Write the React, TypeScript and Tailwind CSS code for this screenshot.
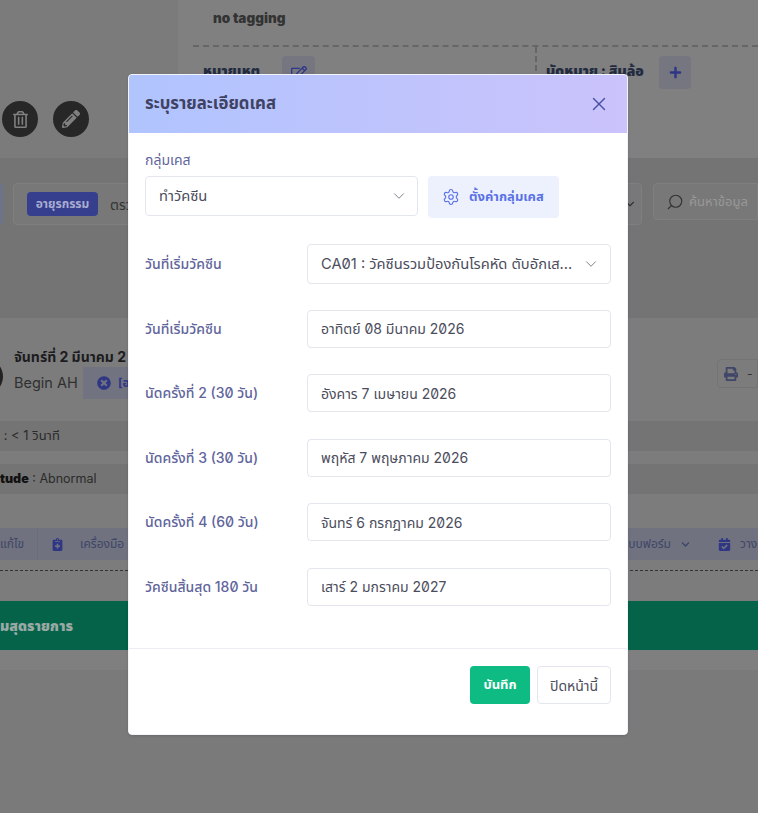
import { ChevronDown, Search, Settings, X } from "lucide-react";
import { FaCalendarCheck, FaChevronDown, FaNotesMedical, FaPencilAlt, FaPlus, FaPrint, FaRegEdit, FaRegTrashAlt, FaTimesCircle } from "react-icons/fa";

const fontCls = "font-['Inter','Noto_Sans','Noto_Sans_Thai',sans-serif] slashed-zero";

function Field({ label, value, select }: { label: string; value: string; select?: boolean }) {
  return (
    <div className="flex items-center">
      <div className="w-[162px] pb-[1px] text-[14px] font-medium text-[#5f659b]">{label}</div>
      <div className={`flex flex-1 items-center justify-between rounded border border-[#e4e6ef] pl-[13px] pr-[10px] text-[#4b4d5c] ${select ? "h-[40px] text-[14.7px]" : "h-[38px] text-[14px]"}`}>
        <span className="truncate">{value}</span>
        {select && <ChevronDown size={18} strokeWidth={1} className="shrink-0 text-[#55586a]" />}
      </div>
    </div>
  );
}

function Modal() {
  return (
    <div className="absolute left-[128px] top-[74px] h-[661px] w-[500px] overflow-hidden rounded border border-[#f3f4f9] bg-white shadow">
      <div className="flex h-[58px] items-center justify-between bg-gradient-to-r from-[#b0c4fe] to-[#cbc3fb] pl-[16px] pr-[17px]">
        <h2 className="text-[16.8px] font-bold text-[#3f4263]">ระบุรายละเอียดเคส</h2>
        <X size={22} strokeWidth={1.5} className="text-[#4a4fa8]" />
      </div>
      <div className="flex h-[516px] flex-col border-b border-[#eceef3] px-[16px]">
        <div className="mt-[18px] text-[14px] leading-[18px] text-[#5f659b]">กลุ่มเคส</div>
        <div className="mt-[7px] flex items-start gap-[10px]">
          <div className="flex h-[40px] w-[273px] items-center justify-between rounded border border-[#e4e6ef] pl-[13px] pr-[9px] text-[14.7px] text-[#4b4d5c]">
            <span>ทำวัคซีน</span>
            <ChevronDown size={18} strokeWidth={1} className="text-[#55586a]" />
          </div>
          <div className="flex h-[42px] w-[131px] items-center gap-[9px] rounded bg-[#edf1fe] pl-[14px] text-[13px] font-bold text-[#5a71e6]">
            <Settings size={18} strokeWidth={1.5} />
            <span>ตั้งค่ากลุ่มเคส</span>
          </div>
        </div>
        <div className="mt-[26px] flex flex-col">
          <Field select label="วันที่เริ่มวัคซีน" value="CA01 : วัคซีนรวมป้องกันโรคหัด ตับอักเส..." />
          <div className="mt-[25.9px] flex flex-col gap-[26.5px]">
            <Field label="วันที่เริ่มวัคซีน" value="อาทิตย์ 08 มีนาคม 2026" />
            <Field label="นัดครั้งที่ 2 (30 วัน)" value="อังคาร 7 เมษายน 2026" />
            <Field label="นัดครั้งที่ 3 (30 วัน)" value="พฤหัส 7 พฤษภาคม 2026" />
            <Field label="นัดครั้งที่ 4 (60 วัน)" value="จันทร์ 6 กรกฎาคม 2026" />
            <Field label="วัคซีนสิ้นสุด 180 วัน" value="เสาร์ 2 มกราคม 2027" />
          </div>
        </div>
      </div>
      <div className="flex justify-end gap-[7px] px-[16px] pt-[17px]">
        <button className="flex h-[38px] w-[60px] items-center justify-center rounded bg-[#0dbb83] text-[13px] font-bold text-white">บันทึก</button>
        <button className="flex h-[38px] w-[74px] items-center justify-center rounded border border-[#e4e6ef] text-[14px] text-[#4b4d5c]">ปิดหน้านี้</button>
      </div>
    </div>
  );
}

function Background() {
  return (
    <div className="flex h-full flex-col">
      <div className="flex h-[158px] shrink-0 bg-[#808080]">
        <div className="flex w-[178px] shrink-0 items-start gap-[15px] bg-[#7b7b7b] pl-[2px] pt-[101px]">
          <div className="flex h-[36px] w-[36px] items-center justify-center rounded-full bg-[#272727] text-[#808080]"><FaRegTrashAlt size={17} /></div>
          <div className="flex h-[36px] w-[36px] items-center justify-center rounded-full bg-[#272727] text-[#808080]"><FaPencilAlt size={18} /></div>
        </div>
        <div className="flex-1 pl-[15px]">
          <div className="flex h-[45px] items-center pb-[8px] pl-[20px] text-[13.5px] font-black text-[#333]">no tagging</div>
          <div className="flex h-[113px] border-t-2 border-dashed border-[#666]">
            <div className="flex h-[42px] w-[342px] items-start pl-[10px] pt-[9px]">
              <span className="mt-[6px] w-[79px] whitespace-nowrap text-[14px] font-black leading-[18px] text-[#222b40]">หมายเหตุ</span>
              <div className="flex h-[33px] w-[33px] items-center justify-center rounded bg-[#75767f] text-[#2f3785]"><FaRegEdit size={16} /></div>
            </div>
            <div className="flex h-[42px] items-start border-l-2 border-dashed border-[#666] pl-[9px] pt-[9px]">
              <span className="mt-[6px] w-[113px] whitespace-nowrap text-[14px] font-black leading-[18px] text-[#222b40]">นัดหมาย : สินล้อ</span>
              <div className="flex h-[33px] w-[32px] items-center justify-center rounded bg-[#75767f] text-[#2f3785]"><FaPlus size={13} /></div>
            </div>
          </div>
        </div>
      </div>
      <div className="flex h-[160px] shrink-0 items-start bg-[#747474] pt-[25px]">
        <div className="h-[42px] w-[3px] shrink-0 rounded-r bg-[#6d7388]" />
        <div className="ml-[10px] flex h-[42px] w-[629px] shrink-0 items-center gap-[12px] rounded border border-[#7f7f7f] bg-[#787878] pl-[13px] pr-[4px]">
          <span className="flex h-[24px] w-[71px] items-center justify-center rounded bg-[#353f8e] text-[12px] font-bold text-[#a9add0]">อายุรกรรม</span>
          <span className="flex-1 text-[14px] text-[#333]">ตรวจ</span>
          <ChevronDown size={14} className="text-[#333]" />
        </div>
        <div className="ml-[11px] flex h-[37px] flex-1 items-center gap-[5px] rounded-l border border-[#7f7f7f] bg-[#787878] pl-[12px] text-[13px]">
          <Search size={18} strokeWidth={1.5} className="-scale-x-100 text-[#333]" />
          <span className="whitespace-nowrap text-[#999]">ค้นหาข้อมูล</span>
        </div>
      </div>
      <div className="flex flex-1 flex-col bg-[#7c7c7c]">
        <div className="relative h-[93px] shrink-0 pl-[14px] pt-[29px]">
          <div className="absolute left-[-34px] top-[40px] h-[37px] w-[37px] rounded-full bg-[#222]" />
          <div className="text-[14px] font-bold leading-[20px] text-[#1c1c20]">จันทร์ที่ 2 มีนาคม 2</div>
          <div className="flex items-center gap-[5px]">
            <span className="w-[64px] whitespace-nowrap text-[14.5px] text-[#303030]">Begin AH</span>
            <span className="flex h-[32px] w-[60px] items-center gap-[7px] bg-[#717381] pl-[14px] text-[12px] font-bold text-[#2f3785]"><FaTimesCircle size={14} />[อ</span>
          </div>
          <div className="absolute left-[717px] top-[41px] flex h-[29px] w-[41px] items-center gap-[9px] rounded-l border border-[#747474] pl-[6px] text-[#3f4668]"><FaPrint size={14} /><span className="text-[12px] text-[#333]">-</span></div>
        </div>
        <div className="mt-[10px] flex h-[30px] shrink-0 items-center bg-[#747474] text-[13px] text-[#2b2b2b]">&nbsp;: &lt; 1 วินาที</div>
        <div className="mt-[13px] flex h-[30px] shrink-0 items-center bg-[#747474] text-[12.5px] text-[#2b2b2b]"><b className="font-black text-[#111]">tude</b>&nbsp;: Abnormal</div>
        <div className="mt-[34px] flex h-[32px] shrink-0 items-center justify-between bg-[#70727f] text-[12px] text-[#3f4668]">
          <div className="flex h-full items-center">
            <span className="w-[38px] border-r border-[#6b6d78] leading-[32px]">แก้ไข</span>
            <FaNotesMedical size={13} className="ml-[13px] text-[#2f3785]" />
            <span className="ml-[16px]">เครื่องมือ</span>
          </div>
          <div className="flex h-full items-center whitespace-nowrap">
            <span>แบบฟอร์ม</span>
            <FaChevronDown size={9} className="ml-[10px]" />
            <FaCalendarCheck size={13} className="ml-[28px] text-[#2f3785]" />
            <span className="ml-[9px] w-[18px] overflow-hidden">วาง</span>
          </div>
        </div>
        <div className="mt-[10px] h-0 shrink-0 border-t border-dashed border-[#333]" />
        <div className="mt-[30px] flex h-[49px] shrink-0 items-center bg-[#05634a] text-[14px] font-black text-[#9aa9a4]">มสุดรายการ</div>
        <div className="h-[20px] shrink-0 bg-[#7f7f7f]" />
        <div className="flex-1 bg-[#7a7a7a]" />
      </div>
    </div>
  );
}

export default function App() {
  return (
    <div className={`relative h-[813px] w-[758px] overflow-hidden ${fontCls}`}>
      <Background />
      <Modal />
    </div>
  );
}
